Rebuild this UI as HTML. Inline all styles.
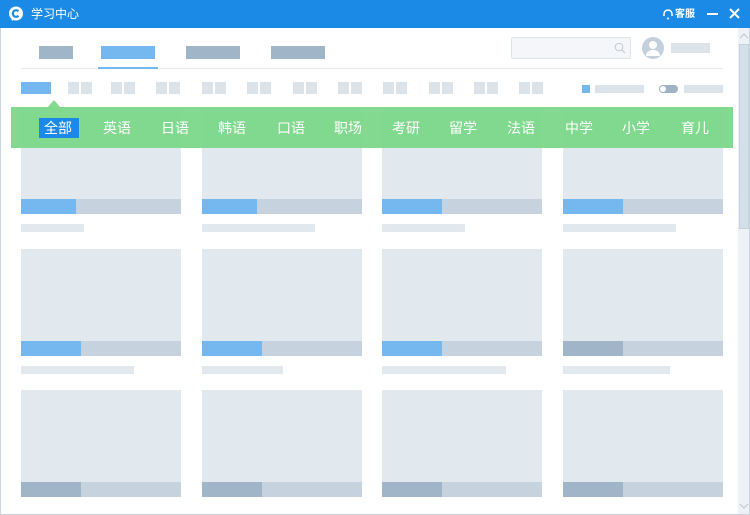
<!DOCTYPE html>
<html><head><meta charset="utf-8"><style>
*{margin:0;padding:0;box-sizing:border-box}
body{width:750px;height:515px;position:relative;overflow:hidden;background:#fff;font-family:"Liberation Sans","Noto Sans CJK SC",sans-serif}
.a{position:absolute}
</style></head><body>
<div class="a" style="left:0;top:0;width:750px;height:515px;border:1px solid #c9d6e0"></div>
<div class="a" style="left:0;top:0;width:750px;height:28px;background:#1b8ae6"></div>
<svg class="a" style="left:8px;top:6px" width="16" height="16" viewBox="0 0 16 16"><circle cx="8" cy="7.5" r="7" fill="#fff"/><path d="M3 13 L5 15 L6 12Z" fill="#fff"/><path d="M10.5 5.2 A3.3 3.3 0 1 0 10.5 9.8" stroke="#1b8ae6" stroke-width="2.2" fill="none"/></svg>
<div class="a" style="left:31px;top:6px;color:#fff;font-size:12px;line-height:16px">学习中心</div>
<svg class="a" style="left:662px;top:9px" width="12" height="11" viewBox="0 0 12 11"><path d="M2 7 V5 A4 4 0 0 1 10 5 V7" stroke="#fff" stroke-width="1.5" fill="none"/><circle cx="6" cy="9.5" r="1" fill="#fff"/></svg>
<div class="a" style="left:675px;top:8px;color:#fff;font-size:10px;font-weight:bold;line-height:13px">客服</div>
<div class="a" style="left:707px;top:13px;width:11px;height:2px;background:#fff"></div>
<svg class="a" style="left:729px;top:8px" width="11" height="11"><path d="M1 1L10 10M10 1L1 10" stroke="#fff" stroke-width="2"/></svg>
<div class="a" style="left:738px;top:28px;width:11px;height:486px;background:#eef2f6"></div>
<div class="a" style="left:739px;top:44px;width:10px;height:185px;background:#d3dfe9;border:1px solid #c3d2de"></div>
<svg class="a" style="left:739px;top:32px" width="10" height="8"><path d="M1 6L5 2L9 6" stroke="#b8c6d3" fill="none"/></svg>
<svg class="a" style="left:739px;top:502px" width="10" height="8"><path d="M1 2L5 6L9 2" stroke="#b8c6d3" fill="none"/></svg>
<div class="a" style="left:39px;top:46px;width:34px;height:13px;background:#a0b5c8"></div>
<div class="a" style="left:101px;top:46px;width:54px;height:13px;background:#75b8ef"></div>
<div class="a" style="left:186px;top:46px;width:54px;height:13px;background:#a0b5c8"></div>
<div class="a" style="left:271px;top:46px;width:54px;height:13px;background:#a0b5c8"></div>
<div class="a" style="left:21px;top:68px;width:702px;height:1px;background:#e6ebef"></div>
<div class="a" style="left:98px;top:67px;width:60px;height:2px;background:#75b8ef"></div>
<div class="a" style="left:511px;top:37px;width:120px;height:22px;background:#f4f6f9;border:1px solid #dce3e9;border-radius:2px"></div>
<svg class="a" style="left:614px;top:42px" width="12" height="12"><circle cx="5" cy="5" r="3.8" stroke="#c0cad3" fill="none"/><path d="M8 8L11 11" stroke="#c0cad3"/></svg>
<div class="a" style="left:642px;top:37px;width:22px;height:22px;border-radius:50%;background:#c3d0dc;overflow:hidden"><div class="a" style="left:7px;top:4px;width:8px;height:8px;border-radius:50%;background:#fff"></div><div class="a" style="left:4px;top:13px;width:14px;height:6px;border-radius:6px 6px 0 0;background:#fff"></div></div>
<div class="a" style="left:671px;top:43px;width:39px;height:10px;background:#dce3e9"></div>
<div class="a" style="left:21px;top:82px;width:30px;height:12px;background:#75b8ef"></div>
<div id="cats"></div>
<div class="a" style="left:582px;top:85px;width:8px;height:8px;background:#75b8ef"></div>
<div class="a" style="left:595px;top:85px;width:49px;height:8px;background:#dce3e9"></div>
<div class="a" style="left:659px;top:85px;width:19px;height:8px;border-radius:4px;background:#9fb3c6"></div>
<div class="a" style="left:660px;top:86px;width:6px;height:6px;border-radius:50%;background:#fff"></div>
<div class="a" style="left:684px;top:85px;width:39px;height:8px;background:#dce3e9"></div>
<div id="cards"></div>
<div class="a" style="left:48px;top:100px;width:0;height:0;border-left:6px solid transparent;border-right:6px solid transparent;border-bottom:7px solid rgba(125,215,138,.96)"></div>
<div class="a" style="left:11px;top:107px;width:722px;height:41px;background:rgba(125,215,138,.96)"></div>
<div class="a" style="left:39px;top:118px;width:40px;height:20px;background:#1b8ae6"></div>
<div class="a" style="left:11px;top:118px;width:722px;height:20px;color:#fff;font-size:14px;line-height:20px">
<span class="a" style="left:33px">全部</span><span class="a" style="left:92px">英语</span><span class="a" style="left:150px">日语</span><span class="a" style="left:207px">韩语</span><span class="a" style="left:266px">口语</span><span class="a" style="left:323px">职场</span><span class="a" style="left:381px">考研</span><span class="a" style="left:438px">留学</span><span class="a" style="left:496px">法语</span><span class="a" style="left:554px">中学</span><span class="a" style="left:611px">小学</span><span class="a" style="left:670px">育儿</span></div>
<script>
var h='';var xs=[68,111,156,202,247,293,338,383,429,474,519];
xs.forEach(function(x){h+='<div class="a" style="left:'+x+'px;top:82px;width:11px;height:12px;background:#dce3e9"></div><div class="a" style="left:'+(x+13)+'px;top:82px;width:11px;height:12px;background:#dce3e9"></div>';});
document.getElementById('cats').innerHTML=h;
var c='';var cx=[21,202,382,563];
var rows=[[107,[[55,'#75b8ef',63],[55,'#75b8ef',113],[60,'#75b8ef',83],[60,'#75b8ef',113]]],[249,[[60,'#75b8ef',113],[60,'#75b8ef',81],[60,'#75b8ef',124],[60,'#a0b5c8',107]]],[390,[[60,'#a0b5c8',0],[60,'#a0b5c8',0],[60,'#a0b5c8',0],[60,'#a0b5c8',0]]]];
rows.forEach(function(r){var t=r[0];r[1].forEach(function(d,i){var x=cx[i];
c+='<div class="a" style="left:'+x+'px;top:'+t+'px;width:160px;height:92px;background:#e1e8ee"></div>';
c+='<div class="a" style="left:'+x+'px;top:'+(t+92)+'px;width:160px;height:15px;background:#c6d3de"></div>';
c+='<div class="a" style="left:'+x+'px;top:'+(t+92)+'px;width:'+d[0]+'px;height:15px;background:'+d[1]+'"></div>';
if(d[2])c+='<div class="a" style="left:'+x+'px;top:'+(t+117)+'px;width:'+d[2]+'px;height:8px;background:#e1e8ee"></div>';});});
document.getElementById('cards').innerHTML=c;
</script>
</body></html>
